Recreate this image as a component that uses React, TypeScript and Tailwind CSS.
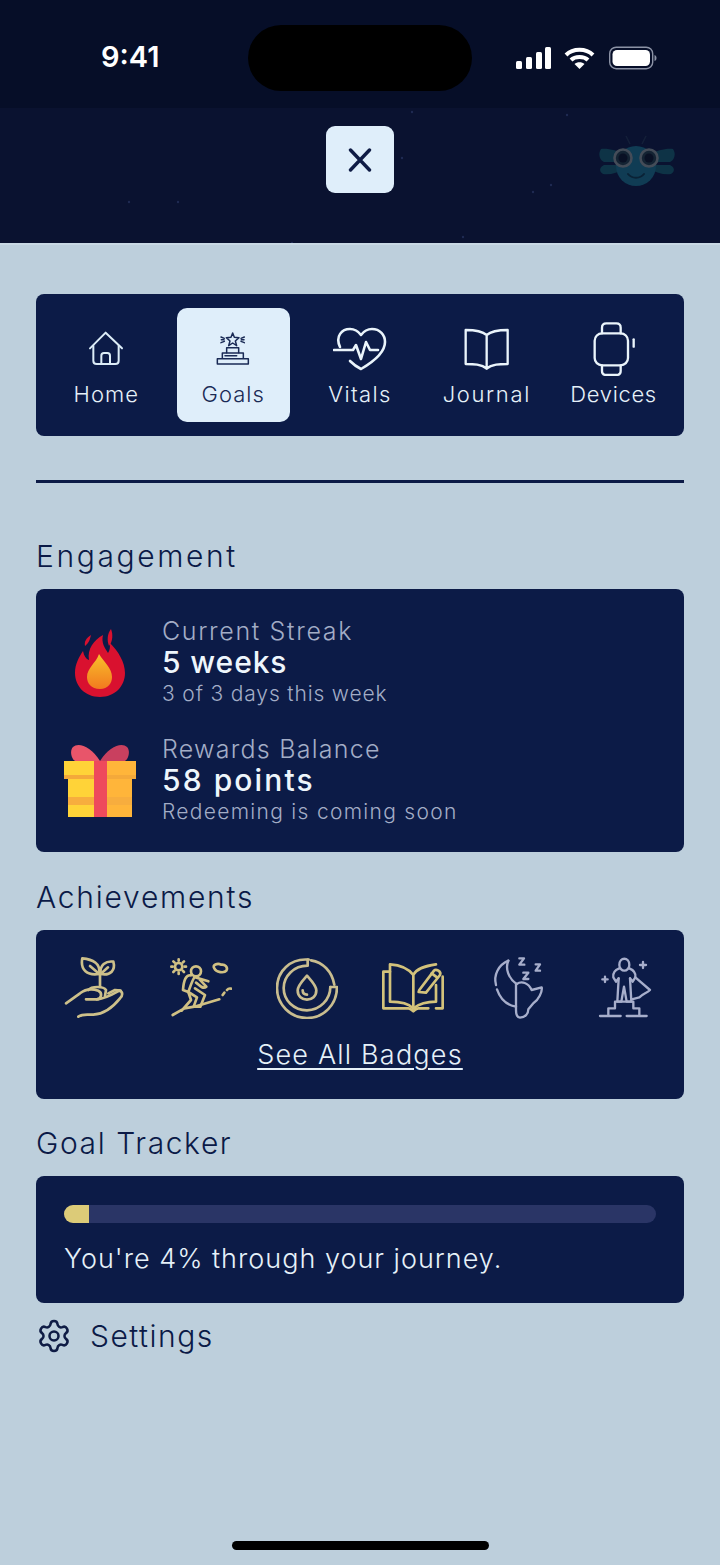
import { Settings } from "lucide-react";

const gold = "#cdc08a";
const grey = "#a7aecb";

function Signal() {
  return (
    <svg width="36" height="24" viewBox="0 0 36 24" fill="#fff">
      <rect x="0" y="15" width="6" height="8" rx="1.5" />
      <rect x="10" y="11" width="6" height="12" rx="1.5" />
      <rect x="20" y="6" width="6" height="17" rx="1.5" />
      <rect x="29" y="1" width="6" height="22" rx="1.5" />
    </svg>
  );
}

function Wifi() {
  return (
    <svg width="31" height="24" viewBox="0 0 31 24" fill="none" stroke="#fff" strokeWidth="4">
      <path d="M2 9 C9 2 22 2 29 9" />
      <path d="M7 14 C11 10 20 10 24 14" />
      <path d="M15.5 23 L10.5 18 C13 15.5 18 15.5 20.5 18 Z" fill="#fff" stroke="none" />
    </svg>
  );
}

function Battery() {
  return (
    <svg width="48" height="24" viewBox="0 0 48 24" fill="none">
      <rect x="0.7" y="1.2" width="43" height="21.5" rx="6.5" stroke="#8c93a6" strokeWidth="1.4" />
      <rect x="3.5" y="4" width="37.5" height="16" rx="4.5" fill="#fff" />
      <path d="M45.5 9 C47 9.5 47.5 10.5 47.5 12 C47.5 13.5 47 14.5 45.5 15 Z" fill="#8c93a6" />
    </svg>
  );
}

function Bug() {
  return (
    <svg width="80" height="56" viewBox="0 0 80 56" fill="none">
      <path d="M32 9 L28 1 M44 9 L48 1" stroke="#14203a" strokeWidth="1.5" />
      <path d="M3 14 C10 13 20 16 26 19 V27 H6 C1 25 0 18 3 14 Z" fill="#0e3346" />
      <path d="M5 39 C12 40 20 38 26 34 V30 H6 C1 32 1 37 5 39 Z" fill="#0e3346" />
      <path d="M75 14 C68 13 58 16 52 19 V27 H72 C77 25 78 18 75 14 Z" fill="#0e3346" />
      <path d="M73 39 C66 40 58 38 52 34 V30 H72 C77 32 77 37 73 39 Z" fill="#0e3346" />
      <circle cx="38" cy="31" r="20" fill="#103c54" />
      <circle cx="25" cy="23" r="8.5" fill="#142333" stroke="#444c58" strokeWidth="2.6" />
      <circle cx="51" cy="23" r="8.5" fill="#142333" stroke="#444c58" strokeWidth="2.6" />
      <circle cx="25" cy="23" r="4.5" fill="#091024" />
      <circle cx="51" cy="23" r="4.5" fill="#091024" />
      <path d="M30 39 C34 44 42 44 46 39" stroke="#0a2236" strokeWidth="2" strokeLinecap="round" />
    </svg>
  );
}

function StarDust() {
  const dots = [
    [178, 202], [567, 115], [551, 185], [463, 237], [292, 243], [402, 158], [129, 202], [533, 192], [412, 112],
  ];
  return (
    <svg className="absolute left-0 top-0 pointer-events-none" width="720" height="243">
      {dots.map(([x, y], i) => (
        <circle key={i} cx={x} cy={y} r="1.2" fill="#1f2a52" />
      ))}
    </svg>
  );
}

function HomeIcon() {
  return (
    <svg width="36" height="36" viewBox="176 126 108 108" fill="none" stroke="#dcecf7" strokeWidth="6" strokeLinecap="round" strokeLinejoin="round">
      <path d="M182 178 L229 131 L278 178" />
      <path d="M192 170 V215 Q192 225 202 225 H258 Q268 225 268 215 V170" />
      <path d="M216 225 V200 Q216 192 224 192 H234 Q242 192 242 200 V225" />
    </svg>
  );
}

function GoalsIcon() {
  return (
    <svg width="36" height="36" viewBox="555 125 108 108" fill="none" stroke="#1a2a55" strokeWidth="4.5" strokeLinecap="round" strokeLinejoin="round">
      <path d="M608 131 L613 144 L627 145 L616 155 L620 169 L608 161 L596 169 L600 155 L589 145 L603 144 Z" />
      <path d="M573 143 L583 147 M573 160 L583 156 M643 143 L633 147 M643 160 L633 156 M574 151 H582 M634 151 H642" />
      <path d="M590 190 V175 H626 V190" />
      <path d="M577 207 V191 H640 V207" />
      <path d="M562 224 V208 H655 V224 Z" />
      <path d="M585 199 H620" />
    </svg>
  );
}

function HeartIcon() {
  return (
    <svg width="54" height="44" viewBox="0 0 54 44" fill="none" stroke="#eaf4fb" strokeWidth="2.6" strokeLinecap="round" strokeLinejoin="round">
      <path d="M7 20 C2 9 9 2 17 2 C22 2 25 4 28 8 C31 4 34 2 39 2 C47 2 52 8 52 15 C52 25 40 35 28 42 C24 40 20 37 17 34" />
      <path d="M1 23 H20 L23 18 L28 32 L33 15 L37 23 H45" />
    </svg>
  );
}

function BookIcon() {
  return (
    <svg width="46" height="42" viewBox="342 114 138 126" fill="none" stroke="#eaf4fb" strokeWidth="7" strokeLinecap="round" strokeLinejoin="round">
      <path d="M410 135 C395 122 365 120 347 120 V222 C370 222 395 222 410 236 C425 222 450 222 473 222 V120 C455 120 425 122 410 135 V236" />
    </svg>
  );
}

function WatchIcon() {
  return (
    <svg width="44" height="54" viewBox="722 96 132 162" fill="none" stroke="#eaf4fb" strokeWidth="7" strokeLinecap="round" strokeLinejoin="round">
      <rect x="730" y="130" width="100" height="96" rx="22" />
      <path d="M752 130 V113 Q752 100 765 100 H795 Q808 100 808 113 V130" />
      <path d="M752 226 V243 Q752 255 765 255 H795 Q808 255 808 243 V226" />
      <path d="M847 148 V170" />
    </svg>
  );
}

function Flame() {
  return (
    <svg width="52" height="68" viewBox="0 0 52 68">
      <defs>
        <linearGradient id="inner" x1="0" y1="0" x2="0" y2="1">
          <stop offset="0" stopColor="#f8c02b" />
          <stop offset="1" stopColor="#f27a1f" />
        </linearGradient>
      </defs>
      <path d="M26 68 C11 68 1 57 1 44 C1 35 5 28 9 22 C10 27 12 30 15 31 C13 20 20 11 29 6 C27 14 31 19 34 24 C36 21 36 18 36 14 C44 22 51 33 51 44 C51 57 41 68 26 68 Z" fill="#d9112f" />
      <path d="M11 17 C10 13 12 9 17 6 C16 10 15 14 11 17 Z" fill="#d9112f" />
      <path d="M35 17 C33 12 33 5 37 0 C39 5 39 12 35 17 Z" fill="#d9112f" />
      <path d="M26 60 C17 60 13 54 13 48 C13 39 22 34 25 25 C30 33 38 39 38 48 C38 54 34 60 26 60 Z" fill="url(#inner)" />
    </svg>
  );
}

function Gift() {
  return (
    <svg width="72" height="73" viewBox="0 0 72 73">
      <path d="M36 17 C27 2 14 -2 9 3 C5 7 8 17 12 17 Z" fill="#e8556a" />
      <path d="M36 17 C45 2 58 -2 63 3 C67 7 64 17 60 17 Z" fill="#c9405f" />
      <rect x="4" y="34" width="32" height="39" fill="#ffd338" />
      <rect x="36" y="34" width="32" height="39" fill="#ffb53a" />
      <rect x="4" y="53" width="64" height="8" fill="#f7ad3e" />
      <rect x="0" y="17" width="36" height="18" fill="#ffd338" />
      <rect x="36" y="17" width="36" height="18" fill="#ffb53a" />
      <rect x="0" y="31" width="72" height="4" fill="#f4a93a" />
      <rect x="30" y="17" width="13" height="56" fill="#ee4a5c" />
    </svg>
  );
}

function Sprout() {
  return (
    <svg width="62" height="62" viewBox="42 51 186 186" fill="none" stroke={gold} strokeWidth="8" strokeLinecap="round" strokeLinejoin="round">
      <path d="M148 102 C112 108 90 90 97 55 C128 58 152 70 148 102 Z" />
      <path d="M152 102 C182 108 197 90 190 65 C168 62 148 75 152 102 Z" />
      <path d="M120 78 L148 102 M174 82 L152 102" />
      <path d="M150 102 V140" />
      <path d="M48 190 L90 160 C105 148 125 145 145 152 C158 158 155 178 140 178 L108 178" />
      <path d="M115 150 C125 138 160 138 168 150 L165 168" />
      <path d="M140 178 C160 178 185 165 208 152 C220 155 218 168 210 175 C190 200 160 222 130 224 C115 225 100 220 85 230" />
      <path d="M175 160 L195 150 L212 152" />
    </svg>
  );
}

function Hiker() {
  return (
    <svg width="62" height="62" viewBox="357 51 186 186" fill="none" stroke="#d0c083" strokeWidth="8" strokeLinecap="round" strokeLinejoin="round">
      <circle cx="383" cy="80" r="11" />
      <path d="M383 58 V62 M383 98 V102 M361 80 H365 M401 80 H405 M367 64 L371 68 M395 92 L399 96 M367 96 L371 92 M395 68 L399 64" />
      <path d="M490 85 C482 75 500 68 510 74 C522 72 532 82 526 92 C520 100 495 98 490 85 Z" />
      <circle cx="435" cy="94" r="15" />
      <path d="M420 106 C405 103 398 120 396 150 L412 156 C418 140 422 125 430 112" />
      <path d="M432 112 L472 124 M440 112 L466 140 C455 150 445 135 435 128" />
      <path d="M412 156 L438 172 L428 200 L448 200 L462 165 L432 145" />
      <path d="M412 156 L420 180 L392 212 M365 225 L400 205 L430 200 L505 178" />
      <path d="M515 165 L520 158 M528 150 C532 145 536 145 540 146" />
    </svg>
  );
}

function Ring() {
  return (
    <svg width="62" height="62" viewBox="677 52 186 186" fill="none" stroke="#c9bd8f" strokeWidth="8" strokeLinecap="round" strokeLinejoin="round">
      <path d="M775 60 C720 55 680 95 680 145 C680 195 720 235 770 235 C820 235 860 195 860 142 L840 142" />
      <path d="M840 142 C840 180 808 212 770 212 C730 212 700 182 700 145 C700 110 730 78 772 78 L772 60" />
      <path d="M782 62 C818 68 845 95 852 135" />
      <path d="M770 108 C785 125 798 138 798 152 C798 170 785 180 770 180 C755 180 742 170 742 152 C742 138 755 125 770 108 Z" />
      <path d="M770 165 C760 165 757 158 757 152" />
    </svg>
  );
}

function JournalIcon() {
  return (
    <svg width="62" height="62" viewBox="66 51 186 186" fill="none" stroke="#d3c27b" strokeWidth="8" strokeLinecap="round" strokeLinejoin="round">
      <path d="M90 95 H70 V205 H145 C152 205 155 210 160 214 C165 210 168 205 175 205 H205" />
      <path d="M228 205 H248 V110" />
      <path d="M160 105 C145 85 120 75 90 73 V185 C120 185 145 190 160 205 V105 C170 85 195 78 228 73" />
      <path d="M228 135 V185 C205 185 180 190 160 205" />
      <path d="M178 150 L222 92 C228 85 245 95 240 105 L198 158 L176 156 Z" />
      <path d="M215 100 L232 113" />
    </svg>
  );
}

function MoonIcon() {
  return (
    <svg width="62" height="62" viewBox="384 51 186 186" fill="none" stroke={grey} strokeWidth="7" strokeLinecap="round" strokeLinejoin="round">
      <path d="M445 62 C415 75 400 105 408 135" />
      <path d="M411 148 C420 175 440 195 468 200" />
      <path d="M445 62 C435 85 445 115 470 132" />
      <path d="M470 132 C485 122 505 128 515 150 L545 142 C548 155 535 180 520 190 L505 208 C505 222 495 232 480 233 C470 232 468 222 468 210 V132" />
      <path d="M478 55 H492 L478 74 H493" />
      <path d="M527 73 H540 L527 92 H540" />
      <path d="M490 98 H505 L490 117 H505" />
    </svg>
  );
}

function HeroIcon() {
  return (
    <svg width="62" height="62" viewBox="702 51 186 186" fill="none" stroke={grey} strokeWidth="7" strokeLinecap="round" strokeLinejoin="round">
      <path d="M778 75 C778 50 808 50 808 75 C808 85 800 92 793 92 C786 92 778 85 778 75 Z" />
      <path d="M778 85 C765 90 758 100 760 112 L768 125 L776 115 M808 85 C820 90 828 100 826 112 L818 125 L810 115" />
      <path d="M776 115 L772 185 H784 L792 140 L800 185 H814 L810 115" />
      <path d="M826 112 L870 150 C860 160 850 160 838 172 L815 178" />
      <path d="M765 185 H820 V205 H838 V228 M765 185 V205 H745 V228 M720 228 H782 M800 228 H860" />
      <path d="M735 110 V126 M727 118 H743" />
      <path d="M849 66 V84 M840 75 H858" />
    </svg>
  );
}

function NavItem({ label, icon, active, track }: { label: string; icon: React.ReactNode; active?: boolean; track: string }) {
  return (
    <div
      className={
        active
          ? "h-[114px] rounded-[10px] bg-[#dfeefa] flex flex-col items-center pt-[13px] text-[#1a2a55]"
          : "h-[114px] flex flex-col items-center pt-[13px] text-[#e6f1f9]"
      }
    >
      <div className="h-[56px] flex items-center justify-center">{icon}</div>
      <span className={"text-[22px] leading-[30px] mt-[2px] font-light " + track}>{label}</span>
    </div>
  );
}

function Stat({
  icon,
  label,
  value,
  sub,
  labelTrack,
  valueTrack,
  subTrack,
}: {
  icon: React.ReactNode;
  label: string;
  value: string;
  sub: string;
  labelTrack: string;
  valueTrack: string;
  subTrack: string;
}) {
  return (
    <div className="flex items-center">
      <div className="w-[72px] mr-[26px] flex justify-center">{icon}</div>
      <div className="flex flex-col">
        <span className={"text-[25px] leading-[31px] font-light text-[#a3adc6] " + labelTrack}>{label}</span>
        <span className={"text-[30px] leading-[31px] font-medium text-[#eef6fc] " + valueTrack}>{value}</span>
        <span className={"text-[21px] leading-[31px] font-light text-[#a3adc6] " + subTrack}>{sub}</span>
      </div>
    </div>
  );
}

export default function App() {
  return (
    <div className="w-[720px] h-[1565px] bg-[#bdcfdc] flex flex-col [font-family:Inter,sans-serif] text-[#0b1a47] overflow-hidden">
      <div className="relative h-[243px] bg-[#0a1230] shrink-0">
        <StarDust />
        <div className="relative h-[108px] bg-[#060e28] grid grid-cols-[248px_224px_248px] pt-[25px]">
          <div className="h-[64px] flex items-center pl-[101px] text-white text-[29px] font-semibold">9:41</div>
          <div className="h-[66px] rounded-[33px] bg-black" />
          <div className="h-[66px] flex items-center pl-[44px]">
            <Signal />
            <div className="ml-[12px]">
              <Wifi />
            </div>
            <div className="ml-[14px]">
              <Battery />
            </div>
          </div>
        </div>
        <div className="relative grid grid-cols-[326px_68px_326px] pt-[18px]">
          <div />
          <div className="h-[67px] rounded-[9px] bg-[#dfeefa] flex items-center justify-center">
            <svg width="24" height="24" viewBox="0 0 24 24" fill="none" stroke="#0f1c45" strokeWidth="3.4" strokeLinecap="round">
              <path d="M2.5 2 L21.5 22 M21.5 2 L2.5 22" />
            </svg>
          </div>
          <div className="flex justify-end pr-[42px] pt-[9px]">
            <Bug />
          </div>
        </div>
      </div>

      <div className="px-[36px] pt-[49px] flex flex-col border-t-2 border-[#c9d9e4]">
        <div className="rounded-[8px] bg-[#0c1b47] px-[14px] py-[14px] grid grid-cols-5 gap-[14px]">
          <NavItem label="Home" icon={<HomeIcon />} track="tracking-[1.1px]" />
          <NavItem label="Goals" icon={<GoalsIcon />} active track="tracking-[1px]" />
          <NavItem label="Vitals" icon={<HeartIcon />} track="tracking-[1.35px]" />
          <NavItem label="Journal" icon={<BookIcon />} track="tracking-[1.65px]" />
          <NavItem label="Devices" icon={<WatchIcon />} track="tracking-[0.65px]" />
        </div>

        <div className="h-[3px] bg-[#0c1b47] mt-[44px]" />

        <h2 className="text-[30px] leading-[40px] mt-[53px] font-light tracking-[2.6px]">Engagement</h2>
        <div className="mt-[13px] h-[263px] rounded-[8px] bg-[#0c1b47] px-[28px] pt-[27px] flex flex-col gap-[25px]">
          <Stat
            icon={<Flame />}
            label="Current Streak"
            value="5 weeks"
            sub="3 of 3 days this week"
            labelTrack="tracking-[1.65px]"
            valueTrack="tracking-[0.9px]"
            subTrack="tracking-[0.85px]"
          />
          <Stat
            icon={<Gift />}
            label="Rewards Balance"
            value="58 points"
            sub="Redeeming is coming soon"
            labelTrack="tracking-[1.25px]"
            valueTrack="tracking-[2.1px]"
            subTrack="tracking-[1.3px]"
          />
        </div>

        <h2 className="text-[30px] leading-[40px] mt-[25px] font-light tracking-[1.75px]">Achievements</h2>
        <div className="mt-[13px] h-[169px] rounded-[8px] bg-[#0c1b47] px-[28px] pt-[27px] flex flex-col">
          <div className="flex justify-between">
            <Sprout />
            <Hiker />
            <Ring />
            <JournalIcon />
            <MoonIcon />
            <HeroIcon />
          </div>
          <a className="mt-[16px] self-center text-[27px] leading-[40px] font-light text-[#e6f1f9] underline underline-offset-[4px] tracking-[1.2px]">
            See All Badges
          </a>
        </div>

        <h2 className="text-[30px] leading-[40px] mt-[24px] font-light tracking-[1.6px]">Goal Tracker</h2>
        <div className="mt-[13px] h-[127px] rounded-[8px] bg-[#0c1b47] px-[28px] pt-[29px]">
          <div className="h-[18px] rounded-full bg-[#2a3566] overflow-hidden">
            <div className="h-full w-[25px] bg-[#dccb78]" />
          </div>
          <p className="mt-[16px] text-[27px] leading-[40px] font-light text-[#e6f1f9] tracking-[1px]">You're 4% through your journey.</p>
        </div>

        <div className="mt-[13px] flex items-center">
          <Settings size={36} strokeWidth={1.7} className="text-[#0f1c45]" />
          <span className="ml-[18px] text-[30px] leading-[40px] font-light tracking-[1.5px]">Settings</span>
        </div>
      </div>

      <div className="mt-auto mb-[15px] self-center w-[257px] h-[9px] rounded-full bg-black" />
    </div>
  );
}
